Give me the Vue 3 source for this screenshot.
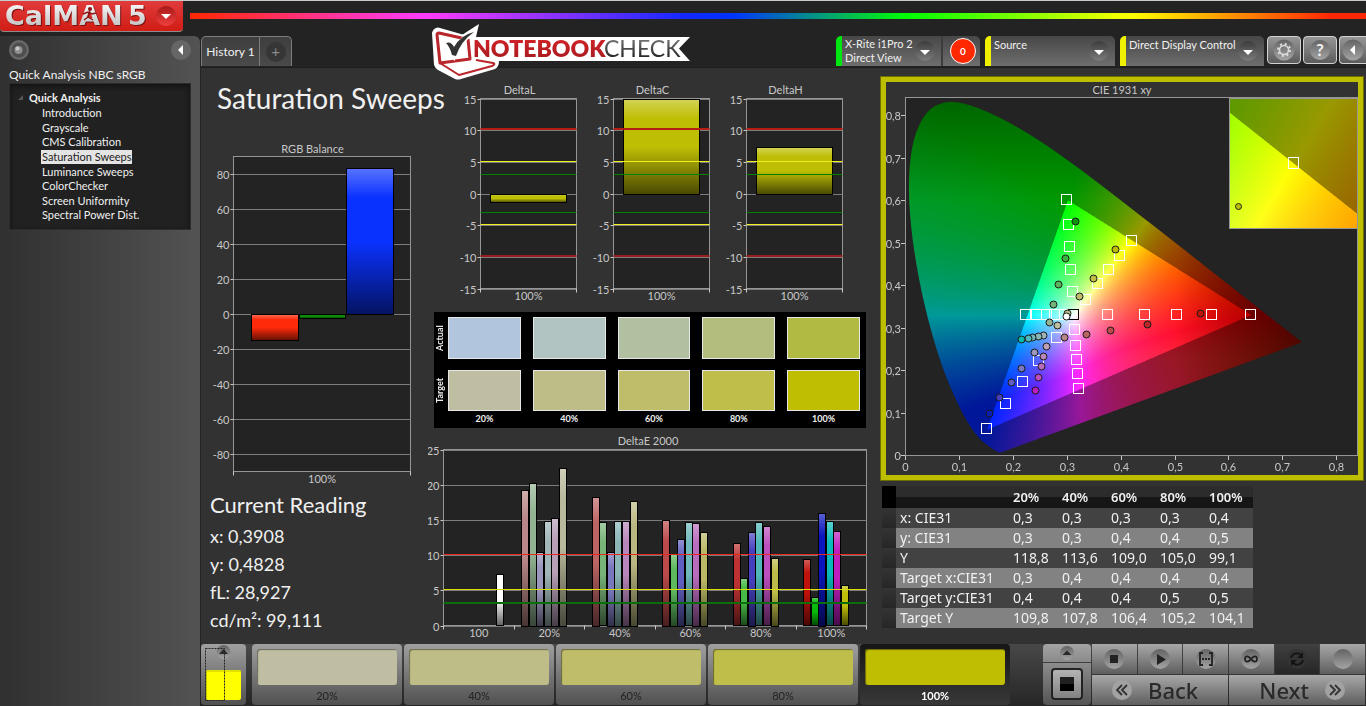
<template>
  <div class="app">
    <svg class="defs" width="0" height="0" aria-hidden="true">
      <defs>
        <linearGradient id="bar-shade" x1="0" y1="0" x2="0" y2="1">
          <stop offset="0" stop-color="#fff" stop-opacity=".32" />
          <stop offset=".2" stop-color="#fff" stop-opacity="0" />
          <stop offset=".5" stop-color="#000" stop-opacity="0" />
          <stop offset="1" stop-color="#000" stop-opacity=".62" />
        </linearGradient>
        <linearGradient id="knob" x1="0" y1="0" x2="0" y2="1">
          <stop offset="0" stop-color="#3c3c3c" />
          <stop offset="1" stop-color="#7c7c7c" />
        </linearGradient>
        <linearGradient id="knob-light" x1="0" y1="0" x2="0" y2="1">
          <stop offset="0" stop-color="#636363" />
          <stop offset="1" stop-color="#a4a4a4" />
        </linearGradient>
      </defs>
    </svg>

    <!-- Top strip -->
    <header class="top">
      <button class="brand" aria-label="CalMAN 5 menu">
        <svg width="183" height="30" viewBox="0 0 183 30">
          <defs>
            <linearGradient id="metal" x1="0" y1="0" x2="0" y2="1">
              <stop offset="0" stop-color="#fff" />
              <stop offset="1" stop-color="#b9b9b9" />
            </linearGradient>
            <linearGradient id="knob-red" x1="0" y1="0" x2="0" y2="1">
              <stop offset="0" stop-color="#a81818" />
              <stop offset="1" stop-color="#f04040" />
            </linearGradient>
          </defs>
          <g class="brand-text">
            <text x="5" y="24">CalMAN</text>
            <text x="128" y="24">5</text>
          </g>
          <circle cx="90" cy="8" r="2" fill="#8c1414" />
          <path d="M83 13l5-2 4 2 4-1M89 11l-1 5 5 3M88 16l-4 3" fill="none" stroke="#8c1414" stroke-width="1.4" />
          <circle cx="166" cy="15" r="10" fill="url(#knob-red)" />
          <path d="M161 13h10l-5 5z" fill="#fff" />
        </svg>
      </button>
      <div class="rainbow"></div>
    </header>

    <div class="body">
      <!-- Sidebar with the workflow tree -->
      <aside class="sidebar">
        <div class="sidebar-tools">
          <button class="plain" aria-label="Options">
            <svg width="20" height="20" viewBox="0 0 20 20">
              <circle cx="10" cy="10" r="10" fill="#686868" />
              <circle cx="10" cy="10" r="7.5" fill="#4e4e4e" />
              <circle cx="9.5" cy="10" r="4" fill="#8f8f8f" />
              <circle cx="8.5" cy="8.5" r="2" fill="#c9c9c9" />
            </svg>
          </button>
          <button class="plain" aria-label="Collapse">
            <svg width="20" height="20" viewBox="0 0 20 20">
              <circle cx="10" cy="10" r="10" fill="#666" />
              <path d="M12 5v10l-5-5z" fill="#fff" />
            </svg>
          </button>
        </div>
        <h2 class="workflow">Quick Analysis NBC sRGB</h2>
        <nav class="tree">
          <p class="tree-root">
            <svg width="5" height="5" viewBox="0 0 5 5"><path d="M5 0v5H0z" fill="#555" /></svg>
            Quick Analysis
          </p>
          <ul>
            <li v-for="page in pages" :key="page">
              <a href="#" :class="{ active: page === currentPage }" @click.prevent="currentPage = page">{{ page }}</a>
            </li>
          </ul>
        </nav>
      </aside>

      <div class="main">
        <!-- Tabs and device controls -->
        <div class="toolbar">
          <div class="tabs">
            <button class="tab">History 1</button>
            <button class="tab add" aria-label="Add history"><span>+</span></button>
          </div>
          <div class="devices">
            <div class="device meter">
              <button class="device-name" aria-haspopup="listbox">X-Rite i1Pro 2<br />Direct View</button>
              <svg class="knob" width="20" height="20" viewBox="0 0 20 20">
                <circle cx="10" cy="10" r="10" fill="url(#knob)" />
                <path d="M5 9h10l-5 5z" fill="#fff" />
              </svg>
              <button class="reading-count">0</button>
            </div>
            <div v-for="d in devices" :key="d.name" class="device" :class="d.cls">
              <select :aria-label="d.name"><option>{{ d.name }}</option></select>
              <svg class="knob" width="20" height="20" viewBox="0 0 20 20">
                <circle cx="10" cy="10" r="10" fill="url(#knob)" />
                <path d="M5 9h10l-5 5z" fill="#fff" />
              </svg>
            </div>
            <button class="square" aria-label="Settings">
              <svg width="22" height="22" viewBox="0 0 22 22">
                <circle cx="11" cy="11" r="10.5" fill="url(#knob-light)" />
                <circle cx="11" cy="11" r="4.5" fill="none" stroke="#ddd" stroke-width="1.5" />
                <circle cx="11" cy="11" r="6" fill="none" stroke="#ddd" stroke-width="2" stroke-dasharray="2 2.71" />
              </svg>
            </button>
            <button class="square help" aria-label="Help"><span>?</span></button>
            <button class="square last" aria-label="Hide">
              <svg width="22" height="22" viewBox="0 0 22 22">
                <circle cx="11" cy="11" r="10.5" fill="url(#knob-light)" />
                <path d="M13 6v10l-5-5z" fill="#fff" />
              </svg>
            </button>
          </div>
        </div>

        <div class="workspace">
          <!-- Left column -->
          <section class="col-left">
            <h1>Saturation Sweeps</h1>
            <BarChart class="rgb" v-bind="rgbBalance" />
            <div class="current">
              <h3>Current Reading</h3>
              <p v-for="r in readings" :key="r">{{ r }}</p>
            </div>
          </section>

          <!-- Middle column -->
          <section class="col-mid">
            <div class="deltas">
              <BarChart v-for="d in deltas" :key="d.title" v-bind="d" />
            </div>
            <div class="swatches">
              <span class="row-name">Actual</span>
              <span v-for="c in actual" :key="c" class="swatch" :style="{ background: c }"></span>
              <span class="row-name">Target</span>
              <span v-for="c in target" :key="c" class="swatch" :style="{ background: c }"></span>
              <span></span>
              <span v-for="l in levels" :key="l" class="swatch-label">{{ l }}</span>
            </div>
            <BarChart class="delta-e" v-bind="deltaE" />
          </section>

          <!-- Right column -->
          <section class="col-right">
            <div class="cie">
              <svg viewBox="0 0 472 393">
                <text class="chart-title" x="236" y="12">CIE 1931 xy</text>
                <rect x="19.5" y="15.5" width="452" height="358" fill="#232323" stroke="#969696" />
                <foreignObject x="20" y="16" width="451" height="357">
                  <canvas ref="locusCanvas" class="paint" width="902" height="714"></canvas>
                </foreignObject>
                <g v-for="n in 9" :key="'x' + n">
                  <path :d="`M${cx((n - 1) / 10)} 374v4`" stroke="#c8c8c8" />
                  <text class="tick-x" :x="cx((n - 1) / 10)" y="389">{{ comma(n - 1) }}</text>
                </g>
                <g v-for="n in 9" :key="'y' + n">
                  <path :d="`M15 ${cy((n - 1) / 10)}h4`" stroke="#c8c8c8" />
                  <text class="tick-y" x="15" :y="cy((n - 1) / 10) + 4">{{ comma(n - 1) }}</text>
                </g>
                <rect
                  v-for="(p, i) in targets" :key="'t' + i"
                  :x="cx(p[0]) - 5" :y="cy(p[1]) - 5" width="10" height="10"
                  fill="none" stroke="#fff"
                />
                <rect :x="cx(.312) - 5" :y="cy(.331) - 5" width="10" height="10" fill="none" stroke="#000" />
                <circle
                  v-for="(p, i) in measured" :key="'m' + i"
                  :cx="cx(p[0])" :cy="cy(p[1])" r="3.5" :fill="p[2]" stroke="#1a1a1a"
                />
                <!-- magnified view of the selected point -->
                <foreignObject x="343" y="16" width="129" height="131">
                  <canvas ref="insetCanvas" class="paint" width="258" height="262"></canvas>
                </foreignObject>
                <rect x="343.5" y="16.5" width="128" height="130" fill="none" stroke="#969696" />
                <rect x="402.5" y="75.5" width="10" height="11" fill="none" stroke="#fff" />
                <circle cx="352.5" cy="124.5" r="3" fill="#bebe00" stroke="#222" />
              </svg>
            </div>
            <table>
              <thead>
                <tr>
                  <th class="grip"></th>
                  <th class="name"></th>
                  <th v-for="l in levels" :key="l">{{ l }}</th>
                </tr>
              </thead>
              <tbody>
                <tr v-for="row in rows" :key="row[0]">
                  <td class="grip"></td>
                  <td v-for="(v, i) in row" :key="i" :class="{ name: i === 0 }">{{ v }}</td>
                </tr>
              </tbody>
            </table>
          </section>
        </div>

        <!-- Bottom bar -->
        <footer class="bottom">
          <button class="palette" aria-label="Pattern">
            <svg width="45" height="61" viewBox="0 0 45 61">
              <circle cx="22.5" cy="8" r="7" fill="url(#knob-light)" />
              <path d="M18 10h9l-4.5-5z" fill="#2a2a2a" />
              <rect x="5" y="26" width="35" height="30" rx="2" fill="#ff0" />
              <path d="M5 27h35M5.5 27v28" stroke="#c6c600" stroke-width="1" />
              <path d="M4.5 4.5h19v52h-19z" fill="none" stroke="#222" stroke-dasharray="2 1" />
            </svg>
          </button>
          <div class="steps">
            <button
              v-for="(l, i) in levels" :key="l" class="step"
              :class="{ active: i === step }" @click="step = i"
            >
              <span class="step-color" :style="{ background: target[i] }"></span>
              {{ l }}
            </button>
          </div>
          <div class="window-pick">
            <button class="pick-up" aria-label="More patterns">
              <svg width="14" height="14" viewBox="0 0 14 14">
                <circle cx="7" cy="7" r="7" fill="url(#knob-light)" />
                <path d="M2.5 9h9L7 4.5z" fill="#2a2a2a" />
              </svg>
            </button>
            <button class="pick-size" aria-label="Window size"><span></span></button>
          </div>
          <div class="transport">
            <button v-for="t in transport" :key="t.name" :aria-label="t.name" :class="{ dark: t.dark }">
              <svg width="20" height="20" viewBox="0 0 20 20">
                <circle cx="10" cy="10" r="10" :fill="t.dark ? '#333' : 'url(#knob-light)'" />
                <path v-if="t.fill" :d="t.fill" :fill="t.dark ? '#141414' : '#222'" />
                <path v-if="t.line" :d="t.line" fill="none" :stroke="t.dark ? '#141414' : '#222'" stroke-width="1.8" />
              </svg>
            </button>
            <button class="wide">
              <svg width="20" height="20" viewBox="0 0 20 20">
                <circle cx="10" cy="10" r="10" fill="#a2a2a2" />
                <path d="M10 5l-5 5 5 5M15 5l-5 5 5 5" fill="none" stroke="#333" stroke-width="1.8" />
              </svg>
              Back
            </button>
            <button class="wide next">
              Next
              <svg width="20" height="20" viewBox="0 0 20 20">
                <circle cx="10" cy="10" r="10" fill="#a2a2a2" />
                <path d="M5 5l5 5-5 5M10 5l5 5-5 5" fill="none" stroke="#333" stroke-width="1.8" />
              </svg>
            </button>
          </div>
        </footer>
      </div>
    </div>

    <svg class="watermark" width="262" height="58" viewBox="0 0 262 58" role="img" aria-label="Notebookcheck">
      <defs>
        <linearGradient id="nb-red" x1="0" y1="0" x2="0" y2="1">
          <stop offset="0" stop-color="#d8252b" />
          <stop offset="1" stop-color="#a3191d" />
        </linearGradient>
        <linearGradient id="nb-gray" x1="0" y1="0" x2="0" y2="1">
          <stop offset="0" stop-color="#8a8a8a" />
          <stop offset="1" stop-color="#101010" />
        </linearGradient>
      </defs>
      <path
        d="M6 6Q3 7 2 11L4 43Q5 46 8 48L25 57Q28 58 31 57L65 47Q69 45 69 39H260L249 26.5L260 15H46L49 2L35 11Q33 13 31 12L10 6Q8 5 6 6Z"
        fill="#fff"
      />
      <g fill="none" stroke="#b9262b" stroke-linejoin="round">
        <path d="M36 17L9 11Q7 11 7 13L10 41L40 37L38 17" stroke-width="3" />
        <path d="M10 41L29 53L62 44Q66 42 63 41L46 38" stroke-width="2" />
      </g>
      <path d="M16 21L24 33Q34 13 44 10" fill="none" stroke="#fff" stroke-width="6" />
      <path d="M16 21Q21 19 24 25Q31 13 44 10Q31 19 26 34L22 33Q20 25 16 21Z" fill="#333" />
      <text class="nb-bold" x="43" y="35">NOTEBOOK</text>
      <text class="nb-light" x="174" y="35">CHECK</text>
    </svg>
  </div>
</template>

<script setup>
import { ref, h, onMounted } from 'vue'

const pages = [
  'Introduction',
  'Grayscale',
  'CMS Calibration',
  'Saturation Sweeps',
  'Luminance Sweeps',
  'ColorChecker',
  'Screen Uniformity',
  'Spectral Power Dist.'
]
const currentPage = ref('Saturation Sweeps')
const step = ref(4)

const devices = [
  { name: 'Source', cls: 'source' },
  { name: 'Direct Display Control', cls: 'display' }
]

const levels = ['20%', '40%', '60%', '80%', '100%']
const actual = ['#b1c6dc', '#b1c4c2', '#b2c0a2', '#b3be7e', '#b1ba42']
const target = ['#bfbea3', '#bfbd87', '#bfbd6a', '#bfbe4a', '#bfbe02']
const readings = ['x: 0,3908', 'y: 0,4828', 'fL: 28,927', 'cd/m²: 99,111']

const rows = [
  ['x: CIE31', '0,3', '0,3', '0,3', '0,3', '0,4'],
  ['y: CIE31', '0,3', '0,3', '0,4', '0,4', '0,5'],
  ['Y', '118,8', '113,6', '109,0', '105,0', '99,1'],
  ['Target x:CIE31', '0,3', '0,4', '0,4', '0,4', '0,4'],
  ['Target y:CIE31', '0,4', '0,4', '0,4', '0,5', '0,5'],
  ['Target Y', '109,8', '107,8', '106,4', '105,2', '104,1']
]

const transport = [
  { name: 'Stop', fill: 'M6 6h8v8H6z' },
  { name: 'Play', fill: 'M7 5v11l9-5.5z' },
  { name: 'Series', line: 'M7 4H4v12h3M13 4h3v12h-3', fill: 'M6 9h2v2H6zM9 9h2v2H9zM12 9h2v2h-2z' },
  { name: 'Continuous', line: 'M10 10c-2-3-6-4-6 0s4 3 6 0 6-4 6 0-4 3-6 0z' },
  { name: 'Refresh', dark: true, line: 'M4 9c1-5 7-6 10-3M16 11c-1 5-7 6-10 3', fill: 'M16 3v6h-6zM4 17v-6h6z' },
  { name: 'Blank' }
]

// Bar chart: axes, grid, bars and limit lines
const BarChart = (p) => {
  const { x, y, w, h: ph } = p.plot
  const py = (v) => y + ((p.max - v) / (p.max - p.min)) * ph
  const band = w / p.cats.length
  return h('svg', { class: 'chart', viewBox: `0 0 ${p.width} ${p.height}` }, [
    h('text', { class: 'chart-title', x: p.width / 2, y: 13 }, p.title),
    h('rect', { x, y, width: w, height: ph, fill: '#232323', stroke: '#969696' }),
    ...p.ticks.map((t) => h('g', [
      h('path', { d: `M${x} ${Math.round(py(t)) + 0.5}h${w}`, stroke: '#7d7d7d' }),
      h('path', { d: `M${x - 3} ${Math.round(py(t)) + 0.5}h3`, stroke: '#c8c8c8' }),
      h('text', { class: 'tick-y', x: x - 4, y: Math.round(py(t)) + 5 }, String(t))
    ])),
    ...p.cats.map((c, i) => h('text', { class: 'tick-x', x: x + band * (i + 0.5), y: y + ph + 11 }, c)),
    ...[...p.cats, ''].map((c, i) => h('path', { d: `M${Math.round(x + band * i - 0.5) + 0.5} ${y + ph}v4`, stroke: '#c8c8c8' })),
    ...p.bars.flatMap((b) => {
      const box = {
        x: b.x,
        y: Math.round(py(Math.max(b.v, 0))) + 0.5,
        width: b.w,
        height: Math.round(Math.abs(py(b.v) - py(0)))
      }
      return [
        h('rect', { ...box, fill: b.color }),
        h('rect', { ...box, fill: 'url(#bar-shade)', stroke: '#000' })
      ]
    }),
    // limits sit just above their grid line
    ...p.lines.map(([v, color, size]) =>
      h('rect', { x, y: Math.round(py(v)) - size, width: w, height: size, fill: color }))
  ])
}
BarChart.props = ['title', 'width', 'height', 'plot', 'min', 'max', 'ticks', 'cats', 'bars', 'lines']

const rgbBalance = {
  title: 'RGB Balance',
  width: 215,
  height: 348,
  plot: { x: 28.5, y: 16.5, w: 177, h: 315 },
  min: -90,
  max: 90,
  ticks: [80, 60, 40, 20, 0, -20, -40, -60, -80],
  cats: ['100%'],
  bars: [
    { x: 46.5, w: 47, v: -15, color: '#ff2a0a' },
    { x: 94.5, w: 46, v: -2.5, color: '#0a8c0a' },
    { x: 141.5, w: 47, v: 83.5, color: '#0a32ff' }
  ],
  lines: []
}

const limits = [
  [10, '#b41e14', 2], [5, '#f0f01e', 1], [3, '#008200', 1],
  [-3, '#008200', 1], [-5, '#f0f01e', 1], [-10, '#961e1e', 2]
]
const deltas = [['DeltaL', -1.3], ['DeltaC', 15], ['DeltaH', 7.4]].map(([title, v]) => ({
  title,
  width: 133,
  height: 225,
  plot: { x: 27.5, y: 17.5, w: 96, h: 190 },
  min: -15,
  max: 15,
  ticks: [15, 10, 5, 0, -5, -10, -15],
  cats: ['100%'],
  bars: [{ x: 37.5, w: 76, v, color: '#bebe05' }],
  lines: limits
}))

// Seven slots per saturation level: R G B C M Y and white
const groups = [
  { values: [0, 0, 0, 0, 0, 0, 7.3], colors: ['', '', '', '', '', '', '#fff'] },
  { values: [19.3, 20.3, 10.5, 14.9, 15.3, 22.4], colors: ['#b98787', '#93b393', '#9a96bc', '#a0b6b8', '#b79fb7', '#b9b99b'] },
  { values: [18.3, 14.7, 10.5, 14.9, 14.9, 17.7], colors: ['#bc6464', '#78b478', '#7a78bc', '#8ab6b8', '#b886ba', '#bab880'] },
  { values: [15, 10.2, 12.3, 14.7, 14.6, 13.3], colors: ['#bc4a4a', '#5eb85e', '#605ebe', '#70b8ba', '#ba6cbc', '#bab866'] },
  { values: [11.7, 6.7, 13.3, 14.7, 14.1, 9.6], colors: ['#bc3232', '#46ba46', '#4640be', '#50b8ba', '#bc4ebe', '#bcba48'] },
  { values: [9.4, 4, 16, 14.8, 13.4, 5.7], colors: ['#be120a', '#0aba0a', '#0a16be', '#0ababa', '#be1ebe', '#bebe0a'] }
]
const deltaE = {
  title: 'DeltaE 2000',
  width: 440,
  height: 211,
  plot: { x: 15.5, y: 17.5, w: 423, h: 176 },
  min: 0,
  max: 25,
  ticks: [25, 20, 15, 10, 5, 0],
  cats: ['100', ...levels],
  bars: groups.flatMap((g, i) => g.values.map((v, n) => ({
    x: Math.round(22.5 + i * 70.5 + n * 7.6) + 0.5,
    w: 7,
    v,
    color: g.colors[n]
  }))).filter((b) => b.v),
  lines: [[10, '#e6281e', 1], [5, '#dcdc00', 1], [3, '#0a6e0a', 2]]
}

// CIE diagram
const cx = (v) => Math.round(19 + v * 539) + 0.5
const cy = (v) => Math.round(373 - v * 425) + 0.5
const comma = (n) => (n ? `0,${n}` : '0')

const targets = [
  [0.299, 0.603], [0.303, 0.544], [0.304, 0.492], [0.306, 0.438], [0.31, 0.386],
  [0.42, 0.507], [0.397, 0.47], [0.377, 0.438], [0.356, 0.404], [0.334, 0.368],
  [0.223, 0.331], [0.243, 0.331], [0.261, 0.331], [0.277, 0.331], [0.295, 0.331],
  [0.375, 0.331], [0.444, 0.331], [0.502, 0.331], [0.568, 0.331], [0.64, 0.331],
  [0.314, 0.296], [0.316, 0.259], [0.317, 0.227], [0.319, 0.194], [0.321, 0.157],
  [0.281, 0.277], [0.247, 0.223], [0.217, 0.173], [0.185, 0.122], [0.15, 0.063]
]
const measured = [
  [0.316, 0.551, '#0a960a'], [0.296, 0.463, '#3cb43c'], [0.283, 0.402, '#5ab45a'], [0.275, 0.355, '#78b478'], [0.268, 0.314, '#93b393'],
  [0.389, 0.485, '#bebe05'], [0.349, 0.416, '#bebe46'], [0.322, 0.373, '#bebe6a'], [0.3, 0.335, '#bebe87'], [0.282, 0.307, '#bebea3'],
  [0.547, 0.333, '#be1405'], [0.449, 0.309, '#b92828'], [0.381, 0.293, '#bc4a4a'], [0.335, 0.284, '#bc6464'], [0.295, 0.278, '#b98787'],
  [0.256, 0.282, '#a0b6b8'], [0.247, 0.279, '#8ab6b8'], [0.236, 0.278, '#70b8ba'], [0.228, 0.275, '#50b8ba'], [0.216, 0.272, '#0abaa8'],
  [0.261, 0.257, '#bfa0b7'], [0.256, 0.232, '#b886ba'], [0.252, 0.209, '#ba6cbc'], [0.246, 0.183, '#bc4ebe'], [0.241, 0.152, '#be1ebe'],
  [0.239, 0.242, '#9a96bc'], [0.215, 0.205, '#7a78bc'], [0.196, 0.171, '#605ebe'], [0.175, 0.137, '#4640be'], [0.155, 0.1, '#0a1eb4'],
  [0.298, 0.326, '#fff']
]
const locus = [
  [0.1741, 0.005], [0.1644, 0.0109], [0.1566, 0.0177], [0.144, 0.0297], [0.1355, 0.0399],
  [0.1241, 0.0578], [0.1096, 0.0868], [0.0913, 0.1327], [0.0687, 0.2007], [0.0454, 0.295],
  [0.0235, 0.4127], [0.0082, 0.5384], [0.0039, 0.6548], [0.0139, 0.7502], [0.0389, 0.812],
  [0.0743, 0.8338], [0.1142, 0.8262], [0.1547, 0.8059], [0.1929, 0.7816], [0.2296, 0.7543],
  [0.2658, 0.7243], [0.3016, 0.6923], [0.3373, 0.6589], [0.4087, 0.5896], [0.5125, 0.4866],
  [0.627, 0.3725], [0.7347, 0.2653]
]

const side = (x, y, a, b) => (b[0] - a[0]) * (y - a[1]) - (b[1] - a[1]) * (x - a[0])
const R = [0.64, 0.33]
const G = [0.3, 0.6]
const B = [0.15, 0.06]

const colorAt = (x, y) => {
  const X = x / y
  const Z = (1 - x - y) / y
  const rgb = [
    3.2406 * X - 1.5372 - 0.4986 * Z,
    -0.9689 * X + 1.8758 + 0.0415 * Z,
    0.0557 * X - 0.204 + 1.057 * Z
  ].map((v) => Math.max(v, 0))
  const top = Math.max(...rgb)
  // keep blues and magentas from going fully saturated
  if (y < 0.33) rgb[1] = Math.max(rgb[1], top * Math.min(0.15, (0.33 - y) * 1.5))
  const inside = side(x, y, R, G) >= 0 && side(x, y, G, B) >= 0 && side(x, y, B, R) >= 0
  let level = inside ? 255 : 153
  if (x > 0.5) level *= 1 - (x - 0.5) * 2.1
  if (y > 0.6) level *= 1 - (y - 0.6) * 1.45
  return rgb.map((v) => (v / top) * level)
}

// Fills a canvas with the chromaticities from (x0, y0) bottom left to (x1, y1) top right
const paint = (canvas, x0, x1, y0, y1, outline) => {
  const { width, height } = canvas
  const ctx = canvas.getContext('2d')
  const img = ctx.createImageData(width, height)
  for (let j = 0; j < height; j++) {
    const y = Math.max(y1 - (j / height) * (y1 - y0), 0.001)
    for (let i = 0; i < width; i++) {
      const [r, g, b] = colorAt(x0 + (i / width) * (x1 - x0), y)
      img.data.set([r, g, b, 255], (j * width + i) * 4)
    }
  }
  ctx.putImageData(img, 0, 0)
  if (!outline) return
  const pts = outline.map(([x, y]) => [((x - x0) / (x1 - x0)) * width, ((y1 - y) / (y1 - y0)) * height])
  ctx.globalCompositeOperation = 'destination-in'
  ctx.beginPath()
  ctx.moveTo(...pts[0])
  for (let i = 1; i < pts.length - 1; i++) {
    const [a, b] = [pts[i], pts[i + 1]]
    ctx.quadraticCurveTo(a[0], a[1], (a[0] + b[0]) / 2, (a[1] + b[1]) / 2)
  }
  ctx.lineTo(...pts[pts.length - 1])
  ctx.closePath()
  ctx.fill()
}

const locusCanvas = ref(null)
const insetCanvas = ref(null)

onMounted(() => {
  paint(locusCanvas.value, 0, 451 / 539, 0, 357 / 425, locus)
  paint(insetCanvas.value, 0.3857, 0.4525, 0.4713, 0.5392)
})
</script>

<style>
html {
  background: #232323;
}

body {
  margin: 0;
}

/* Shared by every chart */
.chart {
  display: block;
  width: 100%;
}

.chart text,
.cie text {
  font: 11px Lato, "Noto Sans", sans-serif;
  fill: #c8c8c8;
}

.chart-title,
.tick-x {
  text-anchor: middle;
}

.tick-y {
  text-anchor: end;
}
</style>

<style scoped>
.app {
  position: relative;
  display: flex;
  flex-direction: column;
  min-height: 100vh;
  box-sizing: border-box;
  border-top: 1px solid #c8cccb;
  background: #232323;
  color: #f0f0f0;
  font: 12px Lato, "Noto Sans", sans-serif;
}

.defs {
  position: absolute;
}

button,
select {
  margin: 0;
  padding: 0;
  border: 0;
  background: none;
  color: inherit;
  font: inherit;
}

h1, h2, h3, p, ul {
  margin: 0;
  padding: 0;
  font-weight: normal;
}

/* Top */
.top {
  display: flex;
  align-items: flex-start;
  gap: 7px;
  height: 35px;
}

.brand {
  border-radius: 0 0 4px 4px;
  border-bottom: 1px solid #8c8c8c;
  background: linear-gradient(#e03c3c, #d01c14);
}

.brand svg {
  display: block;
  overflow: visible;
}

.brand text {
  font: bold 27px "DejaVu Sans", sans-serif;
}

.brand-text {
  fill: url(#metal);
  filter: drop-shadow(1px 1px 0 #7a1010);
}

.rainbow {
  flex: 1;
  height: 6px;
  margin-top: 12px;
  background: linear-gradient(90deg, #ff2800, #ff3cff 20%, #1428ff 42%, #0032ff 46%, #00ff00 61%, #ffff00 80%, #ff2800 97%);
}

.body {
  display: flex;
  flex: 1;
}

/* Sidebar */
.sidebar {
  width: 182px;
  padding: 4px 9px;
  border-radius: 0 6px 0 0;
  background: linear-gradient(90deg, #303030, #535353);
}

.sidebar-tools {
  display: flex;
  justify-content: space-between;
}

.plain svg {
  display: block;
}

.workflow {
  margin: 7px 0 0;
  font-size: 12px;
  line-height: 15px;
}

.tree {
  margin-top: 1px;
  padding: 7px 0 6px 32px;
  border: 1px solid #2c2c2c;
  background: #212121;
  box-shadow: inset 0 2px 5px #111;
}

.tree-root {
  display: flex;
  align-items: center;
  gap: 6px;
  margin-left: -24px;
  font-size: 11px;
  font-weight: bold;
  line-height: 13px;
}

.tree ul {
  display: grid;
  grid-auto-rows: 1fr;
  height: 117px;
  margin-top: 2px;
  list-style: none;
}

.tree li {
  font-size: 11px;
  line-height: 14px;
}

.tree a {
  display: inline-block;
  margin-left: -1px;
  padding-left: 1px;
  color: inherit;
  text-decoration: none;
}

.tree a.active {
  background: #e4e4e4;
  color: #222;
}

/* Toolbar */
.main {
  display: flex;
  flex: 1;
  flex-direction: column;
  min-width: 0;
  margin-left: 1px;
}

.toolbar {
  display: flex;
  justify-content: space-between;
  height: 31px;
}

.tabs {
  display: flex;
  height: 30px;
  box-sizing: border-box;
  border: 1px solid #7d7d7d;
  border-bottom: 0;
  border-radius: 5px 5px 0 0;
  background: linear-gradient(#3e3e3e, #4a4a4a);
}

.tab {
  width: 57px;
}

.tab.add {
  width: 32px;
  border-left: 1px solid #7d7d7d;
  color: #8c8c8c;
}

.tab.add span {
  display: inline-block;
  width: 20px;
  height: 20px;
  border-radius: 10px;
  background: #363636;
  font-size: 15px;
  line-height: 19px;
}

.devices {
  display: flex;
}

.device {
  position: relative;
  height: 30px;
  box-sizing: border-box;
  margin-right: 5px;
  border-left: 6px solid #f0f000;
  border-radius: 5px 5px 0 0;
  background: linear-gradient(#474747, #6e6e6e);
}

.meter {
  display: flex;
  width: 144px;
  border-left-color: #00e610;
}

.source {
  width: 130px;
}

.display {
  width: 144px;
  margin-right: 3px;
}

.device-name {
  width: 101px;
  padding-left: 3px;
  border-right: 2px solid #3c3c3c;
  font-size: 11px;
  line-height: 14px;
  text-align: left;
}

.device select {
  width: 100%;
  height: 30px;
  padding: 0 24px 14px 3px;
  appearance: none;
  font-size: 11px;
}

.knob {
  position: absolute;
  top: 5px;
  right: 6px;
  pointer-events: none;
}

.meter .knob {
  right: 45px;
}

.reading-count {
  width: 26px;
  height: 26px;
  margin: 2px 0 0 7px;
  border: 1px solid #fff;
  border-radius: 13px;
  background: #ff2800;
  color: #fff;
  font-size: 10px;
  font-weight: bold;
}

.square {
  display: flex;
  align-items: center;
  justify-content: center;
  width: 34px;
  height: 28px;
  margin-right: 2px;
  box-sizing: border-box;
  border: 1px solid #d2d2d2;
  border-radius: 4px;
  background: linear-gradient(#969696, #5c5c5c);
}

.square.last {
  width: 27px;
  margin-right: 0;
  border-right: 0;
  border-radius: 4px 0 0 4px;
}

.help span {
  width: 20px;
  height: 20px;
  border-radius: 10px;
  background: linear-gradient(#636363, #a4a4a4);
  font-size: 17px;
  font-weight: bold;
  line-height: 20px;
}

/* Workspace */
.workspace {
  display: grid;
  flex: 1;
  grid-template-columns: 226fr 442fr 497fr;
  align-items: start;
  border-top: 1px solid #1e1e1e;
  background: #323232;
}

.col-left,
.col-mid,
.col-right {
  min-width: 0;
}

h1 {
  height: 60px;
  margin: 12px 0 0 16px;
  font-size: 28px;
  line-height: 36px;
  white-space: nowrap;
}

.rgb {
  width: auto;
  margin: 0 7px 0 4px;
}

.current {
  margin: 3px 0 0 9px;
}

.current h3 {
  margin-bottom: 3px;
  font-size: 22px;
  line-height: 28px;
}

.current p {
  font-size: 18px;
  line-height: 28px;
}

.deltas {
  display: flex;
  margin: 13px 17px 0 26px;
}

.deltas .chart {
  flex: 1;
  min-width: 0;
}

.swatches {
  display: grid;
  grid-template-columns: 8px repeat(5, 1fr);
  grid-template-rows: 42px 41px 14px;
  row-gap: 11px;
  height: 116px;
  margin: 6px 3px 0 7px;
  padding: 5px 0 0;
  box-sizing: border-box;
  background: #000;
}

.swatch {
  margin: 0 6px;
  box-sizing: border-box;
  border: 1px solid #e6e6e6;
}

.row-name {
  width: 8px;
  font-size: 9px;
  font-weight: bold;
  line-height: 12px;
  text-align: center;
  writing-mode: vertical-rl;
  transform: rotate(180deg);
}

.swatch-label {
  margin-top: -9px;
  font-size: 9px;
  font-weight: bold;
  line-height: 12px;
  text-align: center;
}

.delta-e {
  width: auto;
  margin: 4px 1px 0;
}

.cie {
  margin: 9px 3px 0 12px;
  border: 5px solid #bebe00;
  outline: 1px solid #6e6e00;
}

.cie svg,
.paint {
  display: block;
  width: 100%;
}

.paint {
  height: 100%;
}

table {
  width: 371px;
  margin: 6px 0 0 13px;
  border-collapse: collapse;
  table-layout: fixed;
  font: 14px "Noto Sans", sans-serif;
}

th,
td {
  width: 49px;
  height: 20px;
  padding: 0;
  line-height: 20px;
  text-align: left;
  white-space: nowrap;
}

th {
  height: 22px;
  background: linear-gradient(#2c2c2c 50%, #161616 50%);
  font-size: 13px;
  font-weight: 600;
}

th:last-child {
  width: 44px;
}

.name {
  width: 113px;
  padding-left: 4px;
}

.grip {
  width: 14px;
}

th.grip {
  background: #000;
}

tbody tr {
  background: #424242;
}

tbody tr:nth-child(even) {
  background: #828282;
}

td.grip {
  background: linear-gradient(#343434, #262626);
}

/* Bottom bar */
.bottom {
  display: flex;
  height: 62px;
  background: linear-gradient(#484848, #262626);
}

.palette {
  width: 45px;
  height: 61px;
  border-radius: 4px;
  background: linear-gradient(#a0a0a0, #505050);
}

.palette svg {
  display: block;
}

.steps {
  display: flex;
  flex: 1;
  gap: 2px;
  max-width: 758px;
  margin: 0 auto 0 6px;
}

.step {
  display: flex;
  flex: 1;
  flex-direction: column;
  align-items: center;
  justify-content: flex-start;
  gap: 4px;
  height: 61px;
  padding: 5px 5px 0;
  border-radius: 4px;
  background: linear-gradient(#a0a0a0, #505050);
  color: #222;
  font-size: 11px;
  line-height: 14px;
}

.step.active {
  background: linear-gradient(#161616, #383838);
  color: #fff;
  font-weight: bold;
}

.step-color {
  flex-shrink: 0;
  width: 100%;
  height: 36px;
  border-radius: 3px;
  box-shadow: inset 1px 1px 1px rgba(0, 0, 0, .45);
}

.window-pick {
  display: flex;
  flex-direction: column;
  gap: 1px;
  width: 48px;
  margin-right: 1px;
}

.pick-up,
.pick-size {
  display: flex;
  align-items: center;
  justify-content: center;
}

.pick-up {
  height: 18px;
  border-radius: 4px 4px 0 0;
  background: linear-gradient(#a4a4a4, #8a8a8a);
}

.pick-size {
  height: 42px;
  border-radius: 0 0 4px 4px;
  background: linear-gradient(#8c8c8c, #545454);
}

.pick-size span {
  width: 14px;
  height: 14px;
  padding: 7px;
  border: 2px solid #222;
  border-radius: 4px;
  background: linear-gradient(#202020 50%, #000 50%) content-box, linear-gradient(#b4b4b4, #828282);
}

.transport {
  display: grid;
  grid-template-columns: repeat(6, 1fr);
  grid-template-rows: 30px 30px;
  gap: 1px;
  width: 273px;
  margin-right: 1px;
}

.transport button {
  display: flex;
  align-items: center;
  justify-content: center;
  background: linear-gradient(#a8a8a8, #5e5e5e);
}

.transport button.dark {
  background: linear-gradient(#404040, #262626);
}

.transport .wide {
  grid-column: span 3;
  justify-content: flex-start;
  gap: 16px;
  padding: 0 20px;
  color: #2a2a2a;
  font: 500 22px "Noto Sans", sans-serif;
}

.transport .next {
  justify-content: flex-end;
}

/* Site badge over the toolbar */
.watermark {
  position: absolute;
  top: 21px;
  left: 430px;
}

.watermark text {
  font-size: 23px;
  font-family: Lato, sans-serif;
}

.nb-bold {
  font-weight: 800;
  fill: url(#nb-red);
}

.nb-light {
  fill: url(#nb-gray);
}
</style>
